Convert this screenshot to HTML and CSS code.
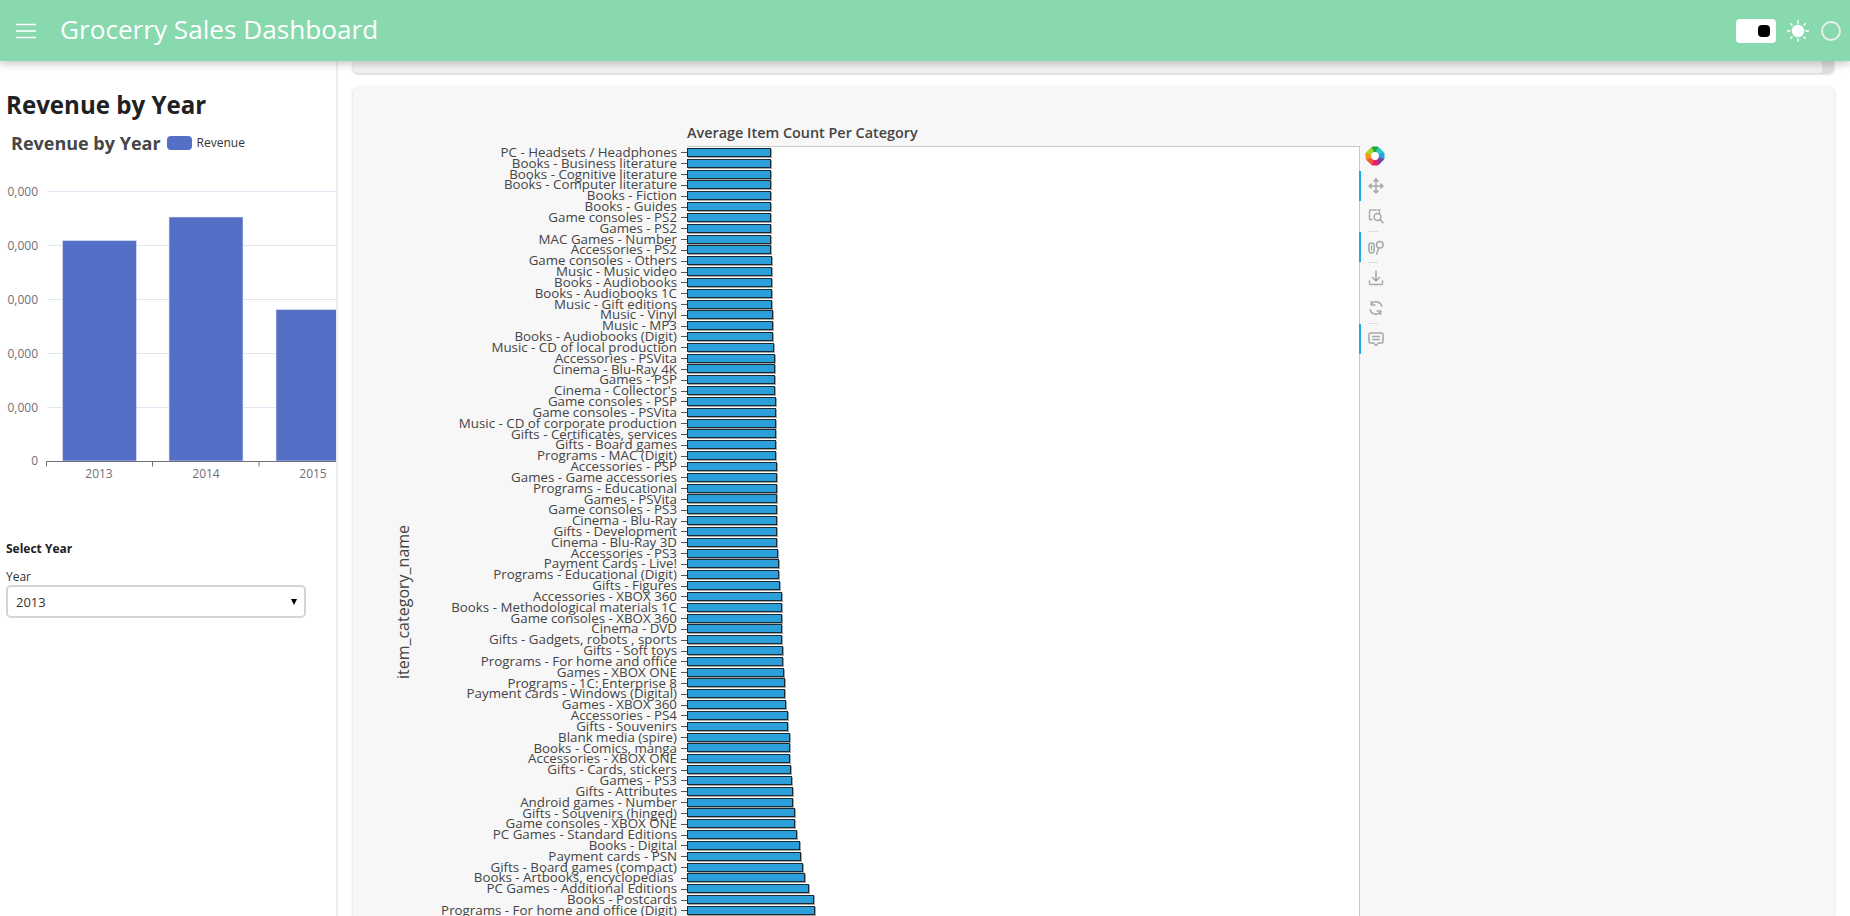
FILE: index.html
```html
<!DOCTYPE html>
<html lang="en">
<head>
<meta charset="utf-8">
<title>Grocerry Sales Dashboard</title>
<link rel="stylesheet" href="styles.css">
</head>
<body>
<header class="topbar">
  <svg class="menu-icon" viewBox="0 0 20 16"><path d="M0 1.500h20M0 8h20M0 14.500h20"/></svg>
  <h1 class="app-title">Grocerry Sales Dashboard</h1>
  <div class="top-actions">
    <div class="toggle"><span class="toggle-knob"></span></div>
    <svg class="sun" viewBox="0 0 24 24"><circle cx="12" cy="12" r="6"/><path d="M12 0.500v3M12 20.500v3M0.500 12h3M20.500 12h3M4 4l1.500 1.500M18.500 18.500l1.500 1.500M4 20l1.500-1.500M18.500 5.500l1.500-1.500"/></svg>
    <span class="ring"></span>
  </div>
</header>
<div class="shell">
  <aside class="sidebar">
    <h2 class="side-heading">Revenue by Year</h2>
    <div class="echart">
      <div class="echart-head">
        <span class="echart-title">Revenue by Year</span>
        <span class="legend-swatch"></span>
        <span class="legend-label">Revenue</span>
      </div>
      <svg class="echart-svg" viewBox="1 0 329 312">
        <g class="grid-lines">
          <path d="M41 13.500H330M41 67.500H330M41 121.500H330M41 175.500H330M41 229.500H330"/>
        </g>
        <g class="y-labels">
          <text x="32" y="18">500,000</text>
          <text x="32" y="72">400,000</text>
          <text x="32" y="126">300,000</text>
          <text x="32" y="180">200,000</text>
          <text x="32" y="234">100,000</text>
          <text x="32" y="287">0</text>
        </g>
        <g class="bars">
          <rect x="56.500" y="62.500" width="74" height="220.500"/>
          <rect x="163" y="39" width="74" height="244"/>
          <rect x="270" y="131.500" width="62" height="151.500"/>
        </g>
        <path class="x-axis" d="M40.500 283.500H330M40.500 283.500v5M146.500 283.500v5M253 283.500v5"/>
        <g class="x-labels">
          <text x="93" y="300">2013</text>
          <text x="200" y="300">2014</text>
          <text x="307" y="300">2015</text>
        </g>
      </svg>
    </div>
    <h3 class="select-heading">Select Year</h3>
    <label class="select-label">Year</label>
    <div class="select-box"><span>2013</span><span class="select-caret"></span></div>
  </aside>
  <main class="content">
    <div class="card card-top"><span class="card-scroll"></span></div>
    <section class="card card-plot">
      <div class="y-title-col"><span class="y-title">item_category_name</span></div>
      <div class="labels-col">
        <div class="row-label">PC - Headsets / Headphones</div>
        <div class="row-label">Books - Business literature</div>
        <div class="row-label">Books - Cognitive literature</div>
        <div class="row-label">Books - Computer literature</div>
        <div class="row-label">Books - Fiction</div>
        <div class="row-label">Books - Guides</div>
        <div class="row-label">Game consoles - PS2</div>
        <div class="row-label">Games - PS2</div>
        <div class="row-label">MAC Games - Number</div>
        <div class="row-label">Accessories - PS2</div>
        <div class="row-label">Game consoles - Others</div>
        <div class="row-label">Music - Music video</div>
        <div class="row-label">Books - Audiobooks</div>
        <div class="row-label">Books - Audiobooks 1C</div>
        <div class="row-label">Music - Gift editions</div>
        <div class="row-label">Music - Vinyl</div>
        <div class="row-label">Music - MP3</div>
        <div class="row-label">Books - Audiobooks (Digit)</div>
        <div class="row-label">Music - CD of local production</div>
        <div class="row-label">Accessories - PSVita</div>
        <div class="row-label">Cinema - Blu-Ray 4K</div>
        <div class="row-label">Games - PSP</div>
        <div class="row-label">Cinema - Collector's</div>
        <div class="row-label">Game consoles - PSP</div>
        <div class="row-label">Game consoles - PSVita</div>
        <div class="row-label">Music - CD of corporate production</div>
        <div class="row-label">Gifts - Certificates, services</div>
        <div class="row-label">Gifts - Board games</div>
        <div class="row-label">Programs - MAC (Digit)</div>
        <div class="row-label">Accessories - PSP</div>
        <div class="row-label">Games - Game accessories</div>
        <div class="row-label">Programs - Educational</div>
        <div class="row-label">Games - PSVita</div>
        <div class="row-label">Game consoles - PS3</div>
        <div class="row-label">Cinema - Blu-Ray</div>
        <div class="row-label">Gifts - Development</div>
        <div class="row-label">Cinema - Blu-Ray 3D</div>
        <div class="row-label">Accessories - PS3</div>
        <div class="row-label">Payment Cards - Live!</div>
        <div class="row-label">Programs - Educational (Digit)</div>
        <div class="row-label">Gifts - Figures</div>
        <div class="row-label">Accessories - XBOX 360</div>
        <div class="row-label">Books - Methodological materials 1C</div>
        <div class="row-label">Game consoles - XBOX 360</div>
        <div class="row-label">Cinema - DVD</div>
        <div class="row-label">Gifts - Gadgets, robots , sports</div>
        <div class="row-label">Gifts - Soft toys</div>
        <div class="row-label">Programs - For home and office</div>
        <div class="row-label">Games - XBOX ONE</div>
        <div class="row-label">Programs - 1C: Enterprise 8</div>
        <div class="row-label">Payment cards - Windows (Digital)</div>
        <div class="row-label">Games - XBOX 360</div>
        <div class="row-label">Accessories - PS4</div>
        <div class="row-label">Gifts - Souvenirs</div>
        <div class="row-label">Blank media (spire)</div>
        <div class="row-label">Books - Comics, manga</div>
        <div class="row-label">Accessories - XBOX ONE</div>
        <div class="row-label">Gifts - Cards, stickers</div>
        <div class="row-label">Games - PS3</div>
        <div class="row-label">Gifts - Attributes</div>
        <div class="row-label">Android games - Number</div>
        <div class="row-label">Gifts - Souvenirs (hinged)</div>
        <div class="row-label">Game consoles - XBOX ONE</div>
        <div class="row-label">PC Games - Standard Editions</div>
        <div class="row-label">Books - Digital</div>
        <div class="row-label">Payment cards - PSN</div>
        <div class="row-label">Gifts - Board games (compact)</div>
        <div class="row-label">Books - Artbooks, encyclopedias&nbsp;</div>
        <div class="row-label">PC Games - Additional Editions</div>
        <div class="row-label">Books - Postcards</div>
        <div class="row-label">Programs - For home and office (Digit)</div>
      </div>
      <div class="plot-col">
        <div class="plot-title">Average Item Count Per Category</div>
        <div class="plot-frame">
          <div class="bar-row"><i class="bar" style="width:84.300px"></i></div>
          <div class="bar-row"><i class="bar" style="width:84.300px"></i></div>
          <div class="bar-row"><i class="bar" style="width:84.300px"></i></div>
          <div class="bar-row"><i class="bar" style="width:84.300px"></i></div>
          <div class="bar-row"><i class="bar" style="width:84.300px"></i></div>
          <div class="bar-row"><i class="bar" style="width:84.300px"></i></div>
          <div class="bar-row"><i class="bar" style="width:84.300px"></i></div>
          <div class="bar-row"><i class="bar" style="width:84.300px"></i></div>
          <div class="bar-row"><i class="bar" style="width:84.300px"></i></div>
          <div class="bar-row"><i class="bar" style="width:84.300px"></i></div>
          <div class="bar-row"><i class="bar" style="width:84.700px"></i></div>
          <div class="bar-row"><i class="bar" style="width:85px"></i></div>
          <div class="bar-row"><i class="bar" style="width:85px"></i></div>
          <div class="bar-row"><i class="bar" style="width:85px"></i></div>
          <div class="bar-row"><i class="bar" style="width:85.300px"></i></div>
          <div class="bar-row"><i class="bar" style="width:85.700px"></i></div>
          <div class="bar-row"><i class="bar" style="width:85.700px"></i></div>
          <div class="bar-row"><i class="bar" style="width:86.300px"></i></div>
          <div class="bar-row"><i class="bar" style="width:87.300px"></i></div>
          <div class="bar-row"><i class="bar" style="width:87.700px"></i></div>
          <div class="bar-row"><i class="bar" style="width:87.700px"></i></div>
          <div class="bar-row"><i class="bar" style="width:88.300px"></i></div>
          <div class="bar-row"><i class="bar" style="width:88.300px"></i></div>
          <div class="bar-row"><i class="bar" style="width:88.700px"></i></div>
          <div class="bar-row"><i class="bar" style="width:88.700px"></i></div>
          <div class="bar-row"><i class="bar" style="width:89px"></i></div>
          <div class="bar-row"><i class="bar" style="width:89px"></i></div>
          <div class="bar-row"><i class="bar" style="width:89.300px"></i></div>
          <div class="bar-row"><i class="bar" style="width:89.300px"></i></div>
          <div class="bar-row"><i class="bar" style="width:89.700px"></i></div>
          <div class="bar-row"><i class="bar" style="width:89.700px"></i></div>
          <div class="bar-row"><i class="bar" style="width:90px"></i></div>
          <div class="bar-row"><i class="bar" style="width:90px"></i></div>
          <div class="bar-row"><i class="bar" style="width:90.300px"></i></div>
          <div class="bar-row"><i class="bar" style="width:90.300px"></i></div>
          <div class="bar-row"><i class="bar" style="width:90.300px"></i></div>
          <div class="bar-row"><i class="bar" style="width:90.300px"></i></div>
          <div class="bar-row"><i class="bar" style="width:91px"></i></div>
          <div class="bar-row"><i class="bar" style="width:92px"></i></div>
          <div class="bar-row"><i class="bar" style="width:92px"></i></div>
          <div class="bar-row"><i class="bar" style="width:93px"></i></div>
          <div class="bar-row"><i class="bar" style="width:94.700px"></i></div>
          <div class="bar-row"><i class="bar" style="width:95px"></i></div>
          <div class="bar-row"><i class="bar" style="width:95px"></i></div>
          <div class="bar-row"><i class="bar" style="width:95.300px"></i></div>
          <div class="bar-row"><i class="bar" style="width:95.300px"></i></div>
          <div class="bar-row"><i class="bar" style="width:95.700px"></i></div>
          <div class="bar-row"><i class="bar" style="width:96.300px"></i></div>
          <div class="bar-row"><i class="bar" style="width:97.300px"></i></div>
          <div class="bar-row"><i class="bar" style="width:97.700px"></i></div>
          <div class="bar-row"><i class="bar" style="width:98.300px"></i></div>
          <div class="bar-row"><i class="bar" style="width:99px"></i></div>
          <div class="bar-row"><i class="bar" style="width:100.700px"></i></div>
          <div class="bar-row"><i class="bar" style="width:101px"></i></div>
          <div class="bar-row"><i class="bar" style="width:103px"></i></div>
          <div class="bar-row"><i class="bar" style="width:103px"></i></div>
          <div class="bar-row"><i class="bar" style="width:103px"></i></div>
          <div class="bar-row"><i class="bar" style="width:104px"></i></div>
          <div class="bar-row"><i class="bar" style="width:104.700px"></i></div>
          <div class="bar-row"><i class="bar" style="width:106.300px"></i></div>
          <div class="bar-row"><i class="bar" style="width:106.300px"></i></div>
          <div class="bar-row"><i class="bar" style="width:107.700px"></i></div>
          <div class="bar-row"><i class="bar" style="width:107.700px"></i></div>
          <div class="bar-row"><i class="bar" style="width:110.300px"></i></div>
          <div class="bar-row"><i class="bar" style="width:113px"></i></div>
          <div class="bar-row"><i class="bar" style="width:114.300px"></i></div>
          <div class="bar-row"><i class="bar" style="width:116.300px"></i></div>
          <div class="bar-row"><i class="bar" style="width:118.300px"></i></div>
          <div class="bar-row"><i class="bar" style="width:122.300px"></i></div>
          <div class="bar-row"><i class="bar" style="width:127px"></i></div>
          <div class="bar-row"><i class="bar" style="width:127.700px"></i></div>
        </div>
      </div>
      <div class="plot-tools">
        <svg class="tool-logo" viewBox="0 0 20 20">
          <g stroke-linejoin="round" stroke-width="1">
            <path fill="#1fa64a" stroke="#1fa64a" d="M10 10 7 1h6z"/>
            <path fill="#2cc4c4" stroke="#2cc4c4" d="M10 10 13.500 1.300l5 5z"/>
            <path fill="#2b9fd9" stroke="#2b9fd9" d="M10 10 19 7v6z"/>
            <path fill="#7b3fa0" stroke="#7b3fa0" d="M10 10 18.700 13.500l-5 5z"/>
            <path fill="#ec1c6e" stroke="#ec1c6e" d="M10 10 13 19H7z"/>
            <path fill="#f0563a" stroke="#f0563a" d="M10 10 6.500 18.700l-5-5z"/>
            <path fill="#f7931e" stroke="#f7931e" d="M10 10 1 13V7z"/>
            <path fill="#a8d52c" stroke="#a8d52c" d="M10 10 1.300 6.500l5-5z"/>
          </g>
          <circle cx="10" cy="10" r="3.900" fill="#fff"/>
        </svg>
        <div class="tool tool-active">
          <svg viewBox="0 0 16 16"><path d="M8 1v14M1 8h14M8 1 6 3.200M8 1l2 2.200M8 15l-2-2.200M8 15l2-2.200M1 8l2.200-2M1 8l2.200 2M15 8l-2.200-2M15 8l-2.200 2"/></svg>
        </div>
        <div class="tool">
          <svg viewBox="0 0 16 16"><path stroke-dasharray="2.500 1.600" d="M1.500 10V2h10v3M1.500 11.500h4"/><circle cx="9.500" cy="9" r="3.400"/><path d="m12 11.600 3 3"/></svg>
        </div>
        <span class="tool-sep"></span>
        <div class="tool tool-active">
          <svg viewBox="0 0 16 16"><rect x="0.800" y="4" width="5.400" height="10" rx="2.700"/><path d="M3.500 7v4"/><circle cx="11.800" cy="5.700" r="3.300"/><path d="m10.700 9-2 6"/></svg>
        </div>
        <span class="tool-sep"></span>
        <div class="tool">
          <svg viewBox="0 0 16 16"><path d="M8 1v9.500M4.500 7.500 8 11l3.500-3.500M1.500 11v2.500a1 1 0 0 0 1 1h11a1 1 0 0 0 1-1V11"/></svg>
        </div>
        <div class="tool">
          <svg viewBox="0 0 16 16"><path d="M13.800 6.300A6 6 0 0 0 3 4.500M2.200 9.700A6 6 0 0 0 13 11.500M3.400 1.500v3.500h3.500M12.600 14.500V11H9.100"/></svg>
        </div>
        <span class="tool-sep"></span>
        <div class="tool tool-active">
          <svg viewBox="0 0 16 16"><path d="M2.500 2h11a1.500 1.500 0 0 1 1.500 1.500v7a1.500 1.500 0 0 1-1.500 1.500H10.500L8 14.500 5.500 12h-3A1.500 1.500 0 0 1 1 10.500v-7A1.500 1.500 0 0 1 2.500 2zM4.500 5.500h7M4.500 8.500h7"/></svg>
        </div>
      </div>
    </section>
  </main>
</div>
</body>
</html>
```

FILE: styles.css
```css
* { box-sizing: border-box; }
html, body { margin: 0; height: 100%; overflow: hidden; }
body {
  display: flex;
  flex-direction: column;
  background: #fff;
  font-family: "Open Sans", "Noto Sans", sans-serif;
  color: #212121;
}

/* Top bar */
.topbar {
  position: relative;
  z-index: 2;
  flex: 0 0 61px;
  display: flex;
  align-items: center;
  padding: 0 9px 0 16px;
  background: #88d9ae;
  box-shadow: 0 3px 8px rgba(0, 0, 0, .22);
}
.menu-icon { width: 20px; height: 16px; fill: none; stroke: #fff; stroke-width: 1.6; }
.app-title {
  margin: -2px 0 0 24px;
  font-size: 26.15px;
  font-weight: 400;
  line-height: 1;
  color: #fff;
}
.top-actions { margin-left: auto; display: flex; align-items: center; }
.toggle {
  width: 40px;
  height: 24px;
  padding-right: 6px;
  display: flex;
  align-items: center;
  justify-content: flex-end;
  background: #fff;
  border-radius: 4px;
}
.toggle-knob { width: 12px; height: 12px; border-radius: 4px; background: #000; }
.sun { width: 22px; height: 22px; margin-left: 11px; fill: #fff; stroke: #fff; stroke-width: 1.5; stroke-linecap: round; }
.ring { width: 20px; height: 20px; margin: 0 0 0 12px; border-radius: 50%; border: 2px solid #e6f1ea; }

/* Shell */
.shell { flex: 1; min-height: 0; display: flex; }

/* Sidebar */
.sidebar {
  flex: 0 0 338px;
  padding: 0 0 0 6px;
  overflow: hidden;
  border-right: 2px solid #eee;
}
.side-heading { margin: 30px 0 0; font-size: 24.1px; line-height: 28px; font-weight: 700; color: #212121; }
.echart { margin-top: 9px; }
.echart-head { display: flex; align-items: center; height: 30px; padding-left: 5px; }
.echart-title { font-size: 18px; font-weight: 700; color: #464646; }
.legend-swatch { width: 25px; height: 14px; margin-left: 6px; border-radius: 4px; background: #5470c6; }
.legend-label { margin: -2px 0 0 5px; font-size: 12px; color: #333; }
.echart-svg { display: block; width: 329px; height: 312px; margin: 20px 0 0 1px; overflow: hidden; }
.grid-lines path { stroke: #e0e6f1; fill: none; }
.y-labels text { text-anchor: end; font-size: 12px; fill: #6e7079; }
.x-labels text { text-anchor: middle; font-size: 12px; fill: #6e7079; }
.bars rect { fill: #5470c6; stroke: #e8ecf8; stroke-width: .6; }
.x-axis { stroke: #6e7079; fill: none; }
.select-heading { margin: 51px 0 0; font-size: 12px; line-height: 16px; font-weight: 700; color: #212121; }
.select-label { display: block; margin-top: 12px; font-size: 12px; line-height: 16px; color: #333; }
.select-box {
  width: 300px;
  height: 33px;
  padding: 0 7px 0 8px;
  display: flex;
  align-items: center;
  justify-content: space-between;
  border: 2px solid #d4d4d4;
  border-radius: 5px;
  font-size: 13px;
  color: #333;
  background: #fff;
}
.select-caret {
  width: 0;
  height: 0;
  border-left: 3.500px solid transparent;
  border-right: 3.500px solid transparent;
  border-top: 6px solid #000;
}

/* Main content */
.content {
  flex: 1;
  min-width: 0;
  padding: 0 16px 0 15px;
  display: flex;
  flex-direction: column;
  gap: 14px;
  overflow: hidden;
}
.card {
  background: #f7f7f7;
  border-radius: 5px;
  box-shadow: 0 1px 3px rgba(0, 0, 0, .22);
}
.card-top { flex: 0 0 12px; display: flex; justify-content: flex-end; border-radius: 0 0 5px 5px; background: #f2f2f2; }
.card-scroll { width: 12px; background: #dedede; border-radius: 0 0 5px 0; }
.card-plot {
  flex: 1;
  min-height: 0;
  display: flex;
  overflow: hidden;
  border-radius: 5px 5px 0 0;
  padding-top: 59px;
}

/* Bokeh-like plot */
.y-title-col { flex: 0 0 36px; margin-left: 38px; position: relative; }
.y-title {
  position: absolute;
  left: 12px;
  top: 456px;
  transform: translate(-50%, -50%) rotate(-90deg);
  white-space: nowrap;
  font-size: 16px;
  color: #444;
}
.labels-col { flex: 0 0 250px; margin-right: 10px; padding-top: 1px; }
.row-label {
  height: 10.836px;
  line-height: 10.836px;
  text-align: right;
  white-space: nowrap;
  font-size: 13.33px;
  color: #444;
}
.plot-col { flex: 0 0 673px; position: relative; }
.plot-title {
  position: absolute;
  left: 0;
  top: -22px;
  font-size: 14.4px;
  line-height: 18px;
  font-weight: 600;
  color: #444;
  white-space: nowrap;
}
.plot-frame {
  background: #fff;
  border-top: 1px solid #c8c8c8;
  border-right: 1px solid #c8c8c8;
  height: 900px;
  position: relative;
}
.bar-row { height: 10.836px; display: flex; align-items: center; position: relative; }
.bar-row::before {
  content: "";
  position: absolute;
  left: -6px;
  top: 50%;
  width: 6px;
  height: 1px;
  background: #555;
}
.bar {
  display: block;
  height: 9px;
  background: #2b9fd9;
  border: 1px solid #1a2a33;
  box-shadow: 1px 1px 0 rgba(90, 90, 90, .55);
}
.plot-tools {
  flex: 0 0 26px;
  display: flex;
  flex-direction: column;
  align-items: stretch;
  margin-left: -1px;
  position: relative;
}
.tool-logo { width: 20px; height: 20px; margin: 0 0 5px 6px; display: block; flex: none; }
.tool { flex: none; height: 30px; padding-left: 7px; display: flex; align-items: center; border-left: 2px solid transparent; }
.tool-active { border-left-color: #1ea7e6; }
.tool svg { width: 16px; height: 16px; fill: none; stroke: #a3a8ac; stroke-width: 1.5; stroke-linecap: round; stroke-linejoin: round; }
.tool-sep { flex: none; height: 1px; width: 10px; margin: 0 0 0 9px; background: #ddd; }
```
